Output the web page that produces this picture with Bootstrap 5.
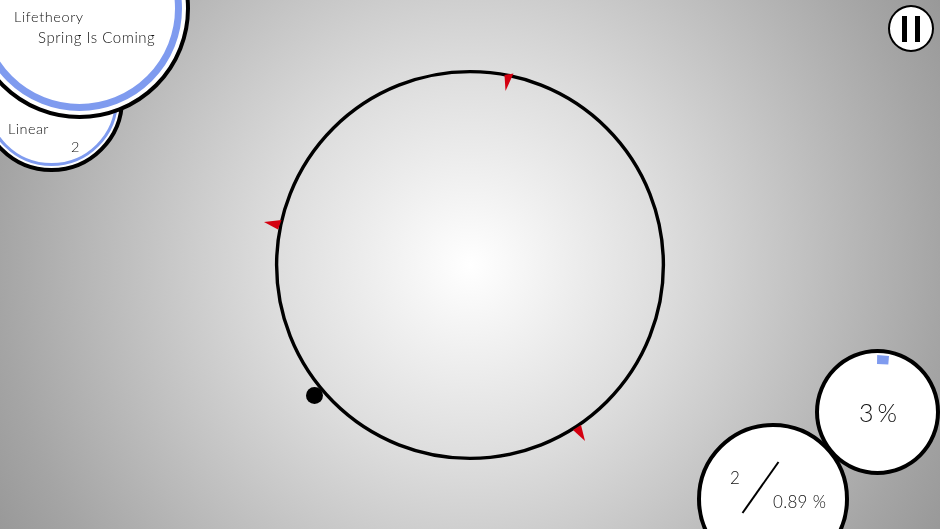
<!DOCTYPE html>
<html lang="en">
<head>
<meta charset="utf-8">
<title>Game</title>
<link href="https://cdn.jsdelivr.net/npm/bootstrap@5.3.0/dist/css/bootstrap.min.css" rel="stylesheet">
<style>
html,body{margin:0;height:100%;overflow:hidden}
.stage{position:relative;width:940px;height:529px;overflow:hidden;background:radial-gradient(circle 560px at 470px 265px,#fff 0%,#dcdcdc 36%,#a5a5a5 84%,#959595 100%);font-family:Lato,"Liberation Sans",sans-serif;color:#333}
.disc{position:absolute;border-radius:50%;background:#fff;border:4px solid #000}
.ring{position:absolute;border-radius:50%;border-style:solid;border-color:#7f9bef}
.lbl{position:absolute;white-space:nowrap;line-height:1;font-weight:300;color:#111;transform:translateZ(0)}
.song{left:-31px;top:-102px;width:221px;height:221px}
.song-ring{left:-23px;top:-94px;width:205px;height:205px;border-width:7px}
.mode{left:-21px;top:27px;width:145px;height:145px}
.mode-ring{left:-15px;top:33px;width:133px;height:133px;border-width:3.5px}
.pct{left:815px;top:349px;width:125px;height:126px}
.stat{left:696.5px;top:423px;width:152px;height:152px}
.pause{left:888px;top:5px;width:46px;height:47px;border-width:2px;display:flex;align-items:center;justify-content:center;gap:8px}
.pause-bar{width:5px;height:26px;background:#000}
.ball{position:absolute;left:306px;top:387px;width:17px;height:17px;border-radius:50%;background:#000}
.overlay{position:absolute;left:0;top:0;width:940px;height:529px}
.t-artist{left:14px;top:10px;font-size:14.5px;letter-spacing:.6px}
.t-song{left:38px;top:29.5px;font-size:15px;letter-spacing:.55px}
.t-mode{left:8px;top:122px;font-size:14.5px;letter-spacing:.45px}
.t-level{left:71px;top:140px;font-size:14.5px}
.t-pct{left:859px;top:400px;font-size:25px;letter-spacing:.3px;word-spacing:-3.5px}
.t-count{left:730px;top:469px;font-size:17px}
.t-rate{left:773px;top:493px;font-size:17px;letter-spacing:.3px}
</style>
</head>
<body>
<main class="stage">
  <div class="disc mode"></div>
  <div class="ring mode-ring"></div>
  <div class="disc song"></div>
  <div class="ring song-ring"></div>
  <span class="lbl t-artist">Lifetheory</span>
  <span class="lbl t-song">Spring Is Coming</span>
  <span class="lbl t-mode">Linear</span>
  <span class="lbl t-level">2</span>

  <div class="disc pause" role="button" aria-label="Pause"><span class="pause-bar"></span><span class="pause-bar"></span></div>

  <div class="disc pct"></div>
  <div class="disc stat"></div>
  <span class="lbl t-pct">3 %</span>
  <span class="lbl t-count">2</span>
  <span class="lbl t-rate">0.89 %</span>

  <div class="ball"></div>

  <svg class="overlay" viewBox="0 0 940 529" aria-hidden="true">
    <circle cx="470" cy="265" r="193.4" fill="none" stroke="#000" stroke-width="3.4"/>
    <polygon points="504.5,75 513.5,73.5 505.5,91" fill="#d40010"/>
    <polygon points="264,222 281.5,220 278,229.5" fill="#d40010"/>
    <polygon points="573,430 581,425 585,441" fill="#d40010"/>
    <polygon points="877.2,355 889,356 888.3,364.5 877,364" fill="#7f9bef"/>
    <line x1="742.5" y1="513" x2="778.5" y2="462" stroke="#000" stroke-width="2"/>
  </svg>
</main>
<script src="https://cdn.jsdelivr.net/npm/bootstrap@5.3.0/dist/js/bootstrap.bundle.min.js"></script>
</body>
</html>
